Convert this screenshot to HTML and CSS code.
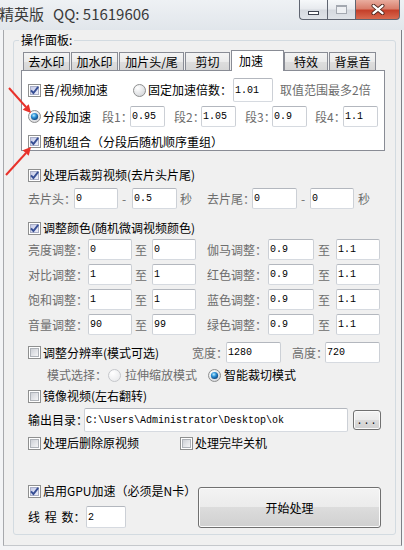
FILE: index.html
```html
<!DOCTYPE html>
<html lang="zh-CN">
<head>
<meta charset="utf-8">
<title>精英版</title>
<link rel="stylesheet" href="styles.css">
</head>
<body>
<div class="window">
  <svg class="defs" width="0" height="0" aria-hidden="true">
    <defs>
      <linearGradient id="cbfill" x1="0" y1="0" x2="1" y2="1">
        <stop offset="0" stop-color="#cbced4"/><stop offset="1" stop-color="#f7f7f8"/>
      </linearGradient>
      <linearGradient id="cbon" x1="0" y1="0" x2="1" y2="1">
        <stop offset="0" stop-color="#c3c8e6"/><stop offset="1" stop-color="#eff1fb"/>
      </linearGradient>
      <radialGradient id="rbfill" cx="0.35" cy="0.3" r="0.8">
        <stop offset="0" stop-color="#ffffff"/><stop offset="1" stop-color="#d2d4d8"/>
      </radialGradient>
      <radialGradient id="rbdis" cx="0.35" cy="0.3" r="0.8">
        <stop offset="0" stop-color="#ffffff"/><stop offset="1" stop-color="#e8e9eb"/>
      </radialGradient>
      <radialGradient id="dot" cx="0.4" cy="0.35" r="0.7">
        <stop offset="0" stop-color="#bdeeff"/><stop offset="0.45" stop-color="#2b90d6"/><stop offset="1" stop-color="#0a3c74"/>
      </radialGradient>
    </defs>
  </svg>

  <div class="titlebar">
    <div class="title"><span>精英版</span><span class="qq">QQ: 51619606</span></div>
    <div class="caption">
      <div class="cbtn cmin"><span class="gmin"></span></div>
      <div class="cbtn cmax"><span class="gmax"></span></div>
      <div class="cbtn cclose">
        <svg width="14" height="11" viewBox="0 0 14 11"><path d="M2.5 1.8 L11.5 9.2 M11.5 1.8 L2.5 9.2" stroke="#4a231b" stroke-width="4" stroke-linecap="round"/><path d="M2.5 1.8 L11.5 9.2 M11.5 1.8 L2.5 9.2" stroke="#ffffff" stroke-width="2.3" stroke-linecap="round"/></svg>
      </div>
    </div>
  </div>

  <div class="client">
    <fieldset class="group">
      <legend>操作面板:</legend>

      <div class="tabs">
        <div class="strip">
          <div class="tab w47">去水印</div>
          <div class="tab w47">加水印</div>
          <div class="tab w65">加片头/尾</div>
          <div class="tab w45">剪切</div>
          <div class="tab sel">加速</div>
          <div class="tab w44">特效</div>
          <div class="tab w47">背景音</div>
        </div>
        <div class="page">
          <div class="row h24">
            <label class="cell w105"><svg class="cb" viewBox="0 0 13 13"><rect x="0.5" y="0.5" width="12" height="12" fill="#fff" stroke="#8e8f8f"/><rect x="2.5" y="2.5" width="8" height="8" fill="url(#cbon)" stroke="#a9aec6"/><path d="M3 6.3 L5.4 9 L10.2 2.8" fill="none" stroke="#374f95" stroke-width="1.9"/></svg>音/视频加速</label>
            <label class="cell w100"><svg class="rb" viewBox="0 0 13 13"><circle cx="6.5" cy="6.5" r="6" fill="url(#rbfill)" stroke="#8e8f8f"/></svg>固定加速倍数：</label>
            <input class="tb w40 h24" type="text" value="1.01" readonly>
            <span class="cell gray ml7">取值范围最多2倍</span>
          </div>
          <div class="row h21 mt4">
            <label class="cell w74"><svg class="rb" viewBox="0 0 13 13"><circle cx="6.5" cy="6.5" r="6" fill="url(#rbfill)" stroke="#8e8f8f"/><circle cx="6.5" cy="6.5" r="3.6" fill="url(#dot)"/></svg>分段加速</label>
            <span class="cell gray w28">段1：</span><input class="tb w35" type="text" value="0.95" readonly>
            <span class="cell gray w27 ml9">段2：</span><input class="tb w35" type="text" value="1.05" readonly>
            <span class="cell gray w27 ml9">段3：</span><input class="tb w35" type="text" value="0.9" readonly>
            <span class="cell gray w28 ml8">段4：</span><input class="tb w35" type="text" value="1.1" readonly>
          </div>
          <div class="row h17 mt6">
            <label class="cell"><svg class="cb" viewBox="0 0 13 13"><rect x="0.5" y="0.5" width="12" height="12" fill="#fff" stroke="#8e8f8f"/><rect x="2.5" y="2.5" width="8" height="8" fill="url(#cbon)" stroke="#a9aec6"/><path d="M3 6.3 L5.4 9 L10.2 2.8" fill="none" stroke="#374f95" stroke-width="1.9"/></svg>随机组合（分段后随机顺序重组）</label>
          </div>
        </div>
      </div>

      <div class="row grow h16 mt16">
        <label class="cell"><svg class="cb" viewBox="0 0 13 13"><rect x="0.5" y="0.5" width="12" height="12" fill="#fff" stroke="#8e8f8f"/><rect x="2.5" y="2.5" width="8" height="8" fill="url(#cbon)" stroke="#a9aec6"/><path d="M3 6.3 L5.4 9 L10.2 2.8" fill="none" stroke="#374f95" stroke-width="1.9"/></svg>处理后裁剪视频(去片头片尾)</label>
      </div>
      <div class="row grow h21 mt5">
        <span class="cell gray w46">去片头：</span><input class="tb w44" type="text" value="0" readonly>
        <span class="cell gray w14 pl4">-</span><input class="tb w45" type="text" value="0.5" readonly>
        <span class="cell gray w30 pl3">秒</span>
        <span class="cell gray w45">去片尾：</span><input class="tb w45" type="text" value="0" readonly>
        <span class="cell gray w13 pl4">-</span><input class="tb w44" type="text" value="0" readonly>
        <span class="cell gray pl4">秒</span>
      </div>

      <div class="row grow h16 mt11">
        <label class="cell"><svg class="cb" viewBox="0 0 13 13"><rect x="0.5" y="0.5" width="12" height="12" fill="#fff" stroke="#8e8f8f"/><rect x="2.5" y="2.5" width="8" height="8" fill="url(#cbon)" stroke="#a9aec6"/><path d="M3 6.3 L5.4 9 L10.2 2.8" fill="none" stroke="#374f95" stroke-width="1.9"/></svg>调整颜色(随机微调视频颜色)</label>
      </div>
      <div class="row grow h21 mt3">
        <span class="cell gray w60">亮度调整：</span><input class="tb w44" type="text" value="0" readonly>
        <span class="cell gray w20 pl3">至</span><input class="tb w44" type="text" value="0" readonly>
        <span class="cell gray w72 pl11">伽马调整：</span><input class="tb w46" type="text" value="0.9" readonly>
        <span class="cell gray w22 pl4">至</span><input class="tb w44" type="text" value="1.1" readonly>
      </div>
      <div class="row grow h21 mt4">
        <span class="cell gray w60">对比调整：</span><input class="tb w44" type="text" value="1" readonly>
        <span class="cell gray w20 pl3">至</span><input class="tb w44" type="text" value="1" readonly>
        <span class="cell gray w72 pl11">红色调整：</span><input class="tb w46" type="text" value="0.9" readonly>
        <span class="cell gray w22 pl4">至</span><input class="tb w44" type="text" value="1.1" readonly>
      </div>
      <div class="row grow h21 mt4">
        <span class="cell gray w60">饱和调整：</span><input class="tb w44" type="text" value="1" readonly>
        <span class="cell gray w20 pl3">至</span><input class="tb w44" type="text" value="1" readonly>
        <span class="cell gray w72 pl11">蓝色调整：</span><input class="tb w46" type="text" value="0.9" readonly>
        <span class="cell gray w22 pl4">至</span><input class="tb w44" type="text" value="1.1" readonly>
      </div>
      <div class="row grow h21 mt4">
        <span class="cell gray w60">音量调整：</span><input class="tb w44" type="text" value="90" readonly>
        <span class="cell gray w20 pl3">至</span><input class="tb w44" type="text" value="99" readonly>
        <span class="cell gray w72 pl11">绿色调整：</span><input class="tb w46" type="text" value="0.9" readonly>
        <span class="cell gray w22 pl4">至</span><input class="tb w44" type="text" value="1.1" readonly>
      </div>

      <div class="row grow h21 mt7">
        <label class="cell w164"><svg class="cb" viewBox="0 0 13 13"><rect x="0.5" y="0.5" width="12" height="12" fill="#fff" stroke="#8e8f8f"/><rect x="2.5" y="2.5" width="8" height="8" fill="url(#cbfill)" stroke="#aeb2b8"/></svg>调整分辨率(模式可选)</label>
        <span class="cell gray w34">宽度：</span><input class="tb w55" type="text" value="1280" readonly>
        <span class="cell gray w33 ml11">高度：</span><input class="tb w55" type="text" value="720" readonly>
      </div>
      <div class="row grow h16 mt4 pl19">
        <span class="cell gray w61">模式选择：</span>
        <label class="cell gray w100"><svg class="rb" viewBox="0 0 13 13"><circle cx="6.5" cy="6.5" r="6" fill="url(#rbdis)" stroke="#c4c6ca"/></svg><span class="ml2">拉伸缩放模式</span></label>
        <label class="cell"><svg class="rb" viewBox="0 0 13 13"><circle cx="6.5" cy="6.5" r="6" fill="url(#rbfill)" stroke="#8e8f8f"/><circle cx="6.5" cy="6.5" r="3.6" fill="url(#dot)"/></svg><span class="ml1">智能裁切模式</span></label>
      </div>
      <div class="row grow h16 mt5">
        <label class="cell"><svg class="cb" viewBox="0 0 13 13"><rect x="0.5" y="0.5" width="12" height="12" fill="#fff" stroke="#8e8f8f"/><rect x="2.5" y="2.5" width="8" height="8" fill="url(#cbfill)" stroke="#aeb2b8"/></svg>镜像视频(左右翻转)</label>
      </div>
      <div class="row grow h24 mt4">
        <span class="cell w56">输出目录：</span><input class="tb w264 h24" type="text" value="C:\Users\Administrator\Desktop\ok" readonly>
        <div class="btn small">...</div>
      </div>
      <div class="row grow h16 mt3">
        <label class="cell w152"><svg class="cb" viewBox="0 0 13 13"><rect x="0.5" y="0.5" width="12" height="12" fill="#fff" stroke="#8e8f8f"/><rect x="2.5" y="2.5" width="8" height="8" fill="url(#cbfill)" stroke="#aeb2b8"/></svg>处理后删除原视频</label>
        <label class="cell"><svg class="cb" viewBox="0 0 13 13"><rect x="0.5" y="0.5" width="12" height="12" fill="#fff" stroke="#8e8f8f"/><rect x="2.5" y="2.5" width="8" height="8" fill="url(#cbfill)" stroke="#aeb2b8"/></svg>处理完毕关机</label>
      </div>

      <div class="bottom grow">
        <div class="leftcol">
          <div class="row h16">
            <label class="cell"><svg class="cb" viewBox="0 0 13 13"><rect x="0.5" y="0.5" width="12" height="12" fill="#fff" stroke="#8e8f8f"/><rect x="2.5" y="2.5" width="8" height="8" fill="url(#cbon)" stroke="#a9aec6"/><path d="M3 6.3 L5.4 9 L10.2 2.8" fill="none" stroke="#374f95" stroke-width="1.9"/></svg>启用GPU加速（必须是N卡）</label>
          </div>
          <div class="row h22 mt7">
            <span class="cell w58 spaced">线 程 数：</span><input class="tb w40 h22" type="text" value="2" readonly>
          </div>
        </div>
        <div class="btn big">开始处理</div>
      </div>
    </fieldset>
  </div>

  <svg class="arrows" width="40" height="180" viewBox="0 0 40 180" aria-hidden="true">
    <line x1="9" y1="88" x2="26" y2="107" stroke="#e8322b" stroke-width="2"/>
    <polygon points="31,113 22.7,109.7 28.7,104.3" fill="#e8322b"/>
    <line x1="6" y1="175" x2="26" y2="153" stroke="#e8322b" stroke-width="2"/>
    <polygon points="31,147 28.7,155.7 22.7,150.3" fill="#e8322b"/>
  </svg>
</div>
</body>
</html>
```

FILE: styles.css
```css
* { box-sizing: border-box; }
html, body { margin: 0; padding: 0; }
body {
  width: 404px;
  height: 550px;
  overflow: hidden;
  background: #f3f4f6;
  font-family: "Noto Sans CJK SC", "Liberation Sans", sans-serif;
  font-size: 12px;
  line-height: 16px;
  color: #000;
}
.window { position: relative; width: 404px; height: 550px; }
.defs { position: absolute; width: 0; height: 0; }

/* title bar */
.titlebar {
  height: 30px;
  display: flex;
  align-items: flex-start;
  background: linear-gradient(#eef1f4, #e1e6eb);
}
.title {
  font-size: 15px;
  line-height: 18px;
  color: #3a3a3a;
  margin: 5px 0 0 -1px;
  white-space: nowrap;
}
.qq { margin-left: 9px; }
.caption { display: flex; margin-left: auto; margin-right: 4px; height: 20px; }
.cbtn {
  height: 20px;
  border: 1px solid #5f6571;
  border-top: 0;
  display: flex;
  align-items: center;
  justify-content: center;
}
.cmin, .cmax {
  width: 28px;
  border-right: 0;
  background: linear-gradient(#f6f8fa, #e7eaee 48%, #d5d9df 52%, #dfe3e8);
}
.cmin { border-radius: 0 0 0 4px; }
.cclose {
  width: 45px;
  border-radius: 0 0 4px 0;
  background: linear-gradient(#e9ad9f, #d97f6d 45%, #c5402a 55%, #d86a50);
}
.gmin {
  width: 11px;
  height: 4px;
  border: 1px solid #3f4450;
  background: #fff;
  align-self: flex-end;
  margin-bottom: 4px;
}
.gmax {
  width: 11px;
  height: 9px;
  border: 1px solid #a3a8b0;
  border-top-width: 2px;
  background: #eef0f3;
}

/* client area */
.client {
  margin-left: 3px;
  width: 399px;
  height: 516px;
  border-left: 1px solid #a7a9ad;
  border-right: 1px solid #7d8087;
  border-bottom: 1px solid #c5c8cc;
  background: #f0f0f0;
  padding-top: 2px;
}
.group {
  margin: 0 0 0 9px;
  width: 383px;
  min-width: 0;
  padding: 0 0 6px 5px;
  border: 1px solid #d3dbe1;
  border-radius: 3px;
}
.group legend {
  padding: 0 2px;
  margin: 0;
  line-height: 16px;
  font-size: 12px;
}

/* tabs */
.tabs { margin-left: 2px; width: 364px; }
.strip {
  display: flex;
  align-items: flex-end;
  height: 20px;
  margin-top: 2px;
  padding-left: 2px;
}
.tab {
  flex: none;
  height: 18px;
  border: 1px solid #898c95;
  border-bottom: 0;
  margin-right: 1px;
  text-align: center;
  line-height: 17px;
  white-space: nowrap;
  background: linear-gradient(#f4f4f4, #ebebeb 50%, #dedede 50%, #d6d6d6);
}
.tab.sel {
  position: relative;
  z-index: 2;
  width: 53px;
  height: 21px;
  margin-right: 0;
  margin-bottom: -1px;
  background: #fff;
  text-align: left;
  padding-left: 7px;
  line-height: 19px;
}
.page {
  height: 81px;
  border: 1px solid #898c95;
  background: #fff;
  padding: 7px 0 0 6px;
}

/* rows */
.row { display: flex; align-items: center; }
.grow { margin-left: 9px; }
.cell { flex: none; white-space: nowrap; display: flex; align-items: center; }
.gray { color: #6d6d6d; }
.spaced { word-spacing: 2px; }

.h16 { height: 16px; }
.h17 { height: 17px; }
.h21 { height: 21px; }
.h22 { height: 22px; }
.h24 { height: 24px; }
.mt3 { margin-top: 3px; }
.mt4 { margin-top: 4px; }
.mt5 { margin-top: 5px; }
.mt6 { margin-top: 6px; }
.mt7 { margin-top: 7px; }
.mt11 { margin-top: 11px; }
.mt16 { margin-top: 16px; }
.ml1 { margin-left: 1px; }
.ml2 { margin-left: 2px; }
.ml7 { margin-left: 7px; }
.ml8 { margin-left: 8px; }
.ml9 { margin-left: 9px; }
.ml11 { margin-left: 11px; }
.pl3 { padding-left: 3px; }
.pl4 { padding-left: 4px; }
.pl11 { padding-left: 11px; }
.pl19 { padding-left: 19px; }

.w13 { width: 13px; }
.w14 { width: 14px; }
.w20 { width: 20px; }
.w22 { width: 22px; }
.w27 { width: 27px; }
.w28 { width: 28px; }
.w30 { width: 30px; }
.w33 { width: 33px; }
.w34 { width: 34px; }
.w35 { width: 35px; }
.w40 { width: 40px; }
.w44 { width: 44px; }
.w45 { width: 45px; }
.w46 { width: 46px; }
.w47 { width: 47px; }
.w55 { width: 55px; }
.w56 { width: 56px; }
.w58 { width: 58px; }
.w60 { width: 60px; }
.w61 { width: 61px; }
.w65 { width: 65px; }
.w72 { width: 72px; }
.w74 { width: 74px; }
.w100 { width: 100px; }
.w105 { width: 105px; }
.w152 { width: 152px; }
.w164 { width: 164px; }
.w264 { width: 264px; }

/* controls */
.cb, .rb {
  flex: none;
  width: 13px;
  height: 13px;
  margin-right: 2px;
  display: block;
}
.tb {
  flex: none;
  height: 21px;
  margin: 0;
  padding: 0 0 0 1px;
  border: 1px solid;
  border-color: #b3b7be #ccd0d6 #d6dae0 #ccd0d6;
  border-radius: 2px;
  background: #fff;
  font-family: "Liberation Mono", "DejaVu Sans Mono", monospace;
  font-size: 10px;
  color: #000;
  outline: none;
}
.tb.h22 { height: 22px; }
.tb.h24 { height: 24px; }

.btn {
  flex: none;
  display: flex;
  align-items: center;
  justify-content: center;
  border: 1px solid #707070;
  border-radius: 3px;
  background: linear-gradient(#f3f3f3 0%, #ebebeb 50%, #dcdcdc 50%, #d0d0d0 100%);
  box-shadow: inset 0 0 0 1px #fbfbfb;
  white-space: nowrap;
}
.btn.small {
  width: 28px;
  height: 20px;
  margin-left: 5px;
  font-family: "Liberation Mono", monospace;
  font-size: 10px;
  line-height: 10px;
  padding-top: 4px;
  letter-spacing: 1px;
}
.btn.big {
  width: 183px;
  height: 41px;
  margin-top: 4px;
}

.bottom { display: flex; margin-top: 32px; }
.leftcol { width: 170px; flex: none; }

/* annotation arrows */
.arrows { position: absolute; left: 0; top: 0; pointer-events: none; }
```
